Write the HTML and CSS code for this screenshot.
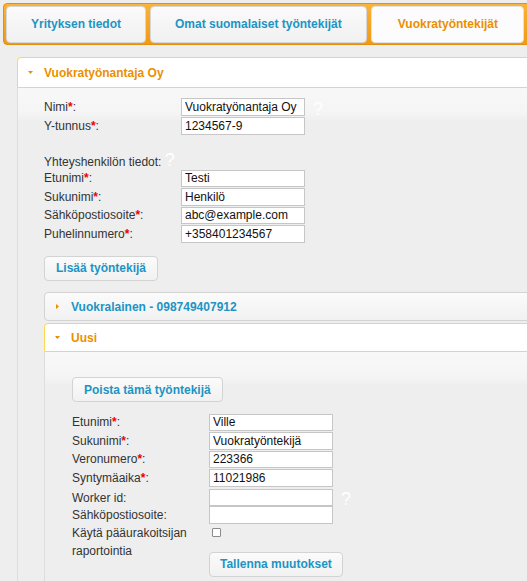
FILE: index.html
```html
<!DOCTYPE html>
<html lang="fi">
<head>
<meta charset="utf-8">
<title>Vuokratyöntekijät</title>
<link rel="stylesheet" href="styles.css">
</head>
<body>
<div class="page">
  <ul class="tabs">
    <li class="tab"><a>Yrityksen tiedot</a></li>
    <li class="tab"><a>Omat suomalaiset työntekijät</a></li>
    <li class="tab tab-active"><a>Vuokratyöntekijät</a></li>
    <li class="tab tab-more"><a></a></li>
  </ul>

  <div class="acc">
    <div class="acc-head acc-head-active acc-head-outer">
      <svg class="tri" width="5" height="5" viewBox="0 0 5 5"><path d="M0 1h5L2.5 4z" fill="#ef8c08"/></svg>
      <span>Vuokratyönantaja Oy</span>
    </div>
    <div class="acc-body acc-body-outer">
      <div class="form">
        <div class="row row-tall">
          <label class="lbl">Nimi<span class="req">*</span>:</label>
          <input class="inp" type="text" value="Vuokratyönantaja Oy">
          <span class="help">?</span>
        </div>
        <div class="row">
          <label class="lbl">Y-tunnus<span class="req">*</span>:</label>
          <input class="inp" type="text" value="1234567-9">
        </div>
        <div class="row row-section">
          <span class="lbl lbl-wide">Yhteyshenkilön tiedot: <span class="help help-inline">?</span></span>
        </div>
        <div class="row">
          <label class="lbl">Etunimi<span class="req">*</span>:</label>
          <input class="inp" type="text" value="Testi">
        </div>
        <div class="row">
          <label class="lbl">Sukunimi<span class="req">*</span>:</label>
          <input class="inp" type="text" value="Henkilö">
        </div>
        <div class="row">
          <label class="lbl">Sähköpostiosoite<span class="req">*</span>:</label>
          <input class="inp" type="text" value="abc@example.com">
        </div>
        <div class="row">
          <label class="lbl">Puhelinnumero<span class="req">*</span>:</label>
          <input class="inp" type="text" value="+358401234567">
        </div>
      </div>

      <button class="btn btn-add" type="button">Lisää työntekijä</button>

      <div class="acc acc-sub">
        <div class="acc-head acc-head-closed">
          <svg class="tri" width="5" height="5" viewBox="0 0 5 5"><path d="M1 0v5l3-2.5z" fill="#ef8c08"/></svg>
          <span>Vuokralainen - 098749407912</span>
        </div>
        <div class="acc-head acc-head-active acc-head-second">
          <svg class="tri" width="5" height="5" viewBox="0 0 5 5"><path d="M0 1h5L2.5 4z" fill="#ef8c08"/></svg>
          <span>Uusi</span>
        </div>
        <div class="acc-body acc-body-inner">
          <button class="btn" type="button">Poista tämä työntekijä</button>
          <div class="form form-worker">
            <div class="row">
              <label class="lbl">Etunimi<span class="req">*</span>:</label>
              <input class="inp" type="text" value="Ville">
            </div>
            <div class="row">
              <label class="lbl">Sukunimi<span class="req">*</span>:</label>
              <input class="inp" type="text" value="Vuokratyöntekijä">
            </div>
            <div class="row">
              <label class="lbl">Veronumero<span class="req">*</span>:</label>
              <input class="inp" type="text" value="223366">
            </div>
            <div class="row">
              <label class="lbl">Syntymäaika<span class="req">*</span>:</label>
              <input class="inp" type="text" value="11021986">
            </div>
            <div class="row">
              <label class="lbl">Worker id:</label>
              <input class="inp" type="text" value="">
              <span class="help">?</span>
            </div>
            <div class="row">
              <label class="lbl">Sähköpostiosoite:</label>
              <input class="inp" type="text" value="">
            </div>
            <div class="row-check">
              <label class="lbl lbl-multi">Käytä pääurakoitsijan raportointia</label>
              <input class="chk" type="checkbox">
              <button class="btn btn-save" type="button">Tallenna muutokset</button>
            </div>
          </div>
        </div>
      </div>
    </div>
  </div>
</div>
</body>
</html>
```

FILE: styles.css
```css
html, body {
  margin: 0;
  padding: 0;
  overflow: hidden;
  background: #eeeeee;
}

body {
  font-family: "Liberation Sans", Arial, sans-serif;
  font-size: 12px;
  color: #333333;
}

.page {
  width: 720px;
  padding: 3px;
}

/* ---------- tabs ---------- */
.tabs {
  display: flex;
  gap: 4px;
  list-style: none;
  margin: 0;
  padding: 2px 0 1px 2px;
  border: 1px solid #e78f08;
  border-radius: 4px;
  background: linear-gradient(#f9b43c, #f6a828 40%, #f19a15);
}

.tab {
  flex: none;
  border: 1px solid #d6d6d6;
  border-radius: 4px;
  background: linear-gradient(#fbfbfb, #f5f5f5 50%, #f1f1f1);
}

.tab a {
  display: block;
  padding: 0 24px;
  height: 35px;
  line-height: 35px;
  font-weight: bold;
  color: #1c94c4;
  white-space: nowrap;
}

.tab-active {
  background: #fcfcfc;
  border-color: #e2e2e2;
}

.tab-active a {
  color: #eb8f00;
  padding: 0 25px 0 26px;
}

.tab-more a {
  width: 80px;
}

/* ---------- accordion ---------- */
.acc {
  margin: 12px 0 0 14px;
}

.acc-head {
  display: flex;
  align-items: center;
  box-sizing: border-box;
  height: 29px;
  padding-left: 10px;
  font-weight: bold;
  white-space: nowrap;
}

.acc-head .tri {
  flex: none;
  margin-right: 11px;
}

.acc-head-outer {
  height: 31px;
}

.acc-head-active {
  border: 1px solid #fbd850;
  border-radius: 4px 4px 0 0;
  background: #ffffff;
  color: #eb8f00;
}

.acc-head-closed {
  border: 1px solid #d3d3d3;
  border-radius: 4px;
  background: linear-gradient(#fbfbfb, #f6f6f6 50%, #f1f1f1);
  color: #1c94c4;
}

.acc-head-second {
  margin-top: 2px;
}

.acc-body {
  border: 1px solid #dddddd;
  border-top: 0;
  background: linear-gradient(#f8f8f8 0, #f5f5f5 24px, #eeeeee 34px, #eeeeee 100%);
}

.acc-body-outer {
  padding: 8.5px 0 0 26px;
  height: 600px;
}

.acc-sub {
  margin: 11.6px 0 0 0;
}

.acc-body-inner {
  padding: 25px 0 0 27px;
  height: 300px;
}

/* ---------- form ---------- */
.row {
  display: grid;
  grid-template-columns: 137px 124px auto;
  align-items: center;
  height: 18.5px;
}

.row-tall {
  height: 20px;
}

.row-section {
  margin-top: 15.5px;
}

.lbl {
  line-height: 18px;
  color: #333333;
  white-space: nowrap;
}

.lbl-wide {
  grid-column: 1 / 4;
}

.req {
  color: #ee0000;
  font-weight: bold;
}

.inp {
  box-sizing: border-box;
  display: block;
  width: 124px;
  height: 17.5px;
  margin: 0;
  padding: 0 3px;
  border: 1px solid #c6c6c6;
  background: #ffffff;
  font-family: "Liberation Sans", Arial, sans-serif;
  font-size: 12px;
  color: #111111;
}

.help {
  margin-left: 8px;
  font-size: 18px;
  line-height: 18px;
  color: #ffffff;
  padding-top: 3px;
}

.help-inline {
  margin-left: 0;
  padding-top: 0;
}

.form-worker {
  margin-top: 11px;
}

.row-check {
  display: grid;
  grid-template-columns: 137px auto;
  grid-template-rows: 27.5px 25px;
}

.lbl-multi {
  grid-row: 1 / 3;
  white-space: normal;
  width: 130px;
}

.chk {
  appearance: none;
  -webkit-appearance: none;
  justify-self: start;
  align-self: start;
  box-sizing: border-box;
  width: 9px;
  height: 9px;
  margin: 4px 0 0 3px;
  border: 1px solid #8a8a8a;
  border-radius: 1px;
  background: #ffffff;
}

/* ---------- buttons ---------- */
.btn {
  display: block;
  box-sizing: border-box;
  height: 25px;
  margin: 0;
  padding: 0 11px;
  border: 1px solid #d3d3d3;
  border-radius: 4px;
  background: linear-gradient(#fbfbfb, #f6f6f6 50%, #f1f1f1);
  font-family: "Liberation Sans", Arial, sans-serif;
  font-size: 12px;
  font-weight: bold;
  color: #1c94c4;
  white-space: nowrap;
}

.btn-add {
  margin-top: 12.5px;
}

.btn-save {
  justify-self: start;
  padding: 0 10px;
}
```
